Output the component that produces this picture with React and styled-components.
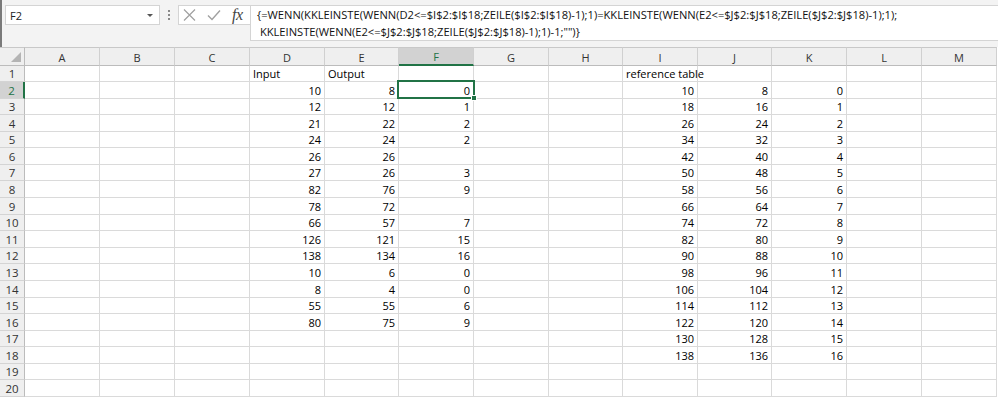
import React from 'react';
import styled, { createGlobalStyle } from 'styled-components';

const Global = createGlobalStyle`
  html, body { margin: 0; padding: 0; background: #ffffff; }
  body { font-family: "Open Sans", "Noto Sans", sans-serif; overflow: hidden; }
`;

const COL_WIDTHS = [75, 75, 75, 75, 74, 75, 75, 74, 75, 74, 75, 75, 75];
const COL_NAMES = 'ABCDEFGHIJKLM'.split('');
const ROW_COUNT = 20;

const rowHeights = (() => {
  const h = [16];
  const start = 82;
  const step = 315 / 19;
  for (let k = 0; k < 19; k++) {
    h.push(Math.round(start + (k + 1) * step) - Math.round(start + k * step));
  }
  return h;
})();

const LEFT = {
  1: { D: 'Input', E: 'Output', I: 'reference table' },
};
const DEF = [
  [10, 8, 0], [12, 12, 1], [21, 22, 2], [24, 24, 2], [26, 26, ''], [27, 26, 3],
  [82, 76, 9], [78, 72, ''], [66, 57, 7], [126, 121, 15], [138, 134, 16],
  [10, 6, 0], [8, 4, 0], [55, 55, 6], [80, 75, 9],
];
const IJK = [
  [10, 8, 0], [18, 16, 1], [26, 24, 2], [34, 32, 3], [42, 40, 4], [50, 48, 5],
  [58, 56, 6], [66, 64, 7], [74, 72, 8], [82, 80, 9], [90, 88, 10], [98, 96, 11],
  [106, 104, 12], [114, 112, 13], [122, 120, 14], [130, 128, 15], [138, 136, 16],
];

function cellValue(row, col) {
  if (LEFT[row] && LEFT[row][col] !== undefined) return { v: LEFT[row][col], num: false };
  if (row >= 2 && row <= 16 && 'DEF'.includes(col)) {
    const v = DEF[row - 2]['DEF'.indexOf(col)];
    return { v: v === '' ? '' : String(v), num: true };
  }
  if (row >= 2 && row <= 18 && 'IJK'.includes(col)) {
    return { v: String(IJK[row - 2]['IJK'.indexOf(col)]), num: true };
  }
  return { v: '', num: false };
}

const Page = styled.div`
  width: 998px;
  height: 397px;
  display: flex;
  flex-direction: column;
  overflow: hidden;
`;

const Toolbar = styled.div`
  height: 47px;
  flex: none;
  box-sizing: border-box;
  background: #f3f3f3;
  border-left: 2px solid #7a7a7a;
  display: flex;
  align-items: flex-start;
  padding: 5px 0 0 3px;
`;

const NameBox = styled.div`
  width: 155px;
  height: 20px;
  box-sizing: border-box;
  background: #ffffff;
  border: 1px solid #d4d4d4;
  display: flex;
  align-items: center;
  justify-content: space-between;
  padding: 0 6px 0 4px;
  font-size: 11px;
  color: #222;
`;

const Arrow = styled.span`
  width: 0;
  height: 0;
  border-left: 3px solid transparent;
  border-right: 3px solid transparent;
  border-top: 3px solid #555;
`;

const Grip = styled.div`
  width: 18px;
  height: 20px;
  display: flex;
  flex-direction: column;
  align-items: center;
  justify-content: center;
  gap: 2px;
  & > i {
    width: 2px;
    height: 2px;
    background: #8a8a8a;
    display: block;
  }
`;

const IconBox = styled.div`
  width: 72px;
  height: 20px;
  box-sizing: border-box;
  background: #ffffff;
  border: 1px solid #d4d4d4;
  border-right: none;
  display: flex;
  align-items: center;
  padding-left: 4px;
  gap: 11px;
`;

const Fx = styled.span`
  font-family: "Liberation Serif", "DejaVu Serif", serif;
  font-style: italic;
  font-size: 16px;
  color: #444;
  line-height: 1;
  letter-spacing: -0.5px;
`;

const FormulaBox = styled.div`
  flex: 1;
  height: 36px;
  box-sizing: border-box;
  background: #ffffff;
  border: 1px solid #d4d4d4;
  border-right: none;
  padding: 0 0 0 6px;
  font-size: 11.15px;
  line-height: 16px;
  color: #111;
  white-space: pre;
  overflow: hidden;
`;

const FormulaLine = styled.div`
  height: 16px;
  padding-top: 1px;
`;

const Sheet = styled.div`
  flex: none;
  display: grid;
  grid-template-columns: 25px ${COL_WIDTHS.map((w) => `${w}px`).join(' ')};
  grid-template-rows: 19px ${rowHeights.map((h) => `${h}px`).join(' ')};
  font-size: 11px;
`;

const Corner = styled.div`
  box-sizing: border-box;
  background: #efefef;
  border-top: 1px solid #c8c8c8;
  border-right: 1px solid #bcbcbc;
  border-bottom: 1px solid #bcbcbc;
  position: relative;
  &::after {
    content: '';
    position: absolute;
    right: 3px;
    bottom: 3px;
    width: 0;
    height: 0;
    border-left: 10px solid transparent;
    border-bottom: 10px solid #b4b4b4;
  }
`;

const ColHead = styled.div`
  box-sizing: border-box;
  background: ${(p) => (p.$active ? '#d2d2d2' : '#efefef')};
  color: ${(p) => (p.$active ? '#217346' : '#333')};
  border-top: 1px solid #c8c8c8;
  border-right: 1px solid #d0d0d0;
  border-bottom: ${(p) => (p.$active ? '2px solid #217346' : '1px solid #bcbcbc')};
  display: flex;
  align-items: center;
  justify-content: center;
  padding-top: 1px;
`;

const RowHead = styled.div`
  box-sizing: border-box;
  background: ${(p) => (p.$active ? '#d2d2d2' : '#efefef')};
  color: ${(p) => (p.$active ? '#217346' : '#333')};
  border-right: ${(p) => (p.$active ? '2px solid #217346' : '1px solid #bcbcbc')};
  border-bottom: 1px solid #d4d4d4;
  display: flex;
  align-items: center;
  justify-content: center;
  font-size: 11.5px;
`;

const Cell = styled.div`
  position: relative;
  box-sizing: border-box;
  border-right: 1px solid #dadada;
  border-bottom: 1px solid #dadada;
  display: flex;
  align-items: flex-end;
  justify-content: ${(p) => (p.$num ? 'flex-end' : 'flex-start')};
  padding: 0 3px 0 3px;
  color: #000;
  line-height: 15px;
  white-space: nowrap;
  overflow: visible;
`;

const Selection = styled.span`
  position: absolute;
  left: -2px;
  top: -2px;
  right: -2px;
  bottom: -1px;
  border: 2px solid #217346;
  pointer-events: none;
  z-index: 2;
  &::after {
    content: '';
    position: absolute;
    right: -4px;
    bottom: -4px;
    width: 4px;
    height: 4px;
    background: #217346;
    border: 1px solid #fff;
  }
`;

const FORMULA_1 = '{=WENN(KKLEINSTE(WENN(D2<=$I$2:$I$18;ZEILE($I$2:$I$18)-1);1)=KKLEINSTE(WENN(E2<=$J$2:$J$18;ZEILE($J$2:$J$18)-1);1);';
const FORMULA_2 = ' KKLEINSTE(WENN(E2<=$J$2:$J$18;ZEILE($J$2:$J$18)-1);1)-1;"")}';

export default function App() {
  const cells = [];
  cells.push(<Corner key="corner" />);
  COL_NAMES.forEach((c) => cells.push(<ColHead key={`h${c}`} $active={c === 'F'}>{c}</ColHead>));
  for (let r = 1; r <= ROW_COUNT; r++) {
    cells.push(<RowHead key={`r${r}`} $active={r === 2}>{r}</RowHead>);
    COL_NAMES.forEach((c) => {
      const { v, num } = cellValue(r, c);
      const sel = r === 2 && c === 'F';
      cells.push(
        <Cell key={`${c}${r}`} $num={num}>
          {v}
          {sel && <Selection />}
        </Cell>
      );
    });
  }

  return (
    <Page>
      <Global />
      <Toolbar>
        <NameBox>
          <span>F2</span>
          <Arrow />
        </NameBox>
        <Grip><i /><i /><i /></Grip>
        <IconBox>
          <svg width="13" height="12" viewBox="0 0 13 12">
            <path d="M1 0.5 L12 11.5 M12 0.5 L1 11.5" stroke="#a0a0a0" strokeWidth="1.2" fill="none" />
          </svg>
          <svg width="14" height="12" viewBox="0 0 14 12">
            <path d="M1 6.5 L5 10.5 L13 1.5" stroke="#a0a0a0" strokeWidth="1.4" fill="none" />
          </svg>
          <Fx>fx</Fx>
        </IconBox>
        <FormulaBox>
          <FormulaLine>{FORMULA_1}</FormulaLine>
          <FormulaLine>{FORMULA_2}</FormulaLine>
        </FormulaBox>
      </Toolbar>
      <Sheet>{cells}</Sheet>
    </Page>
  );
}
